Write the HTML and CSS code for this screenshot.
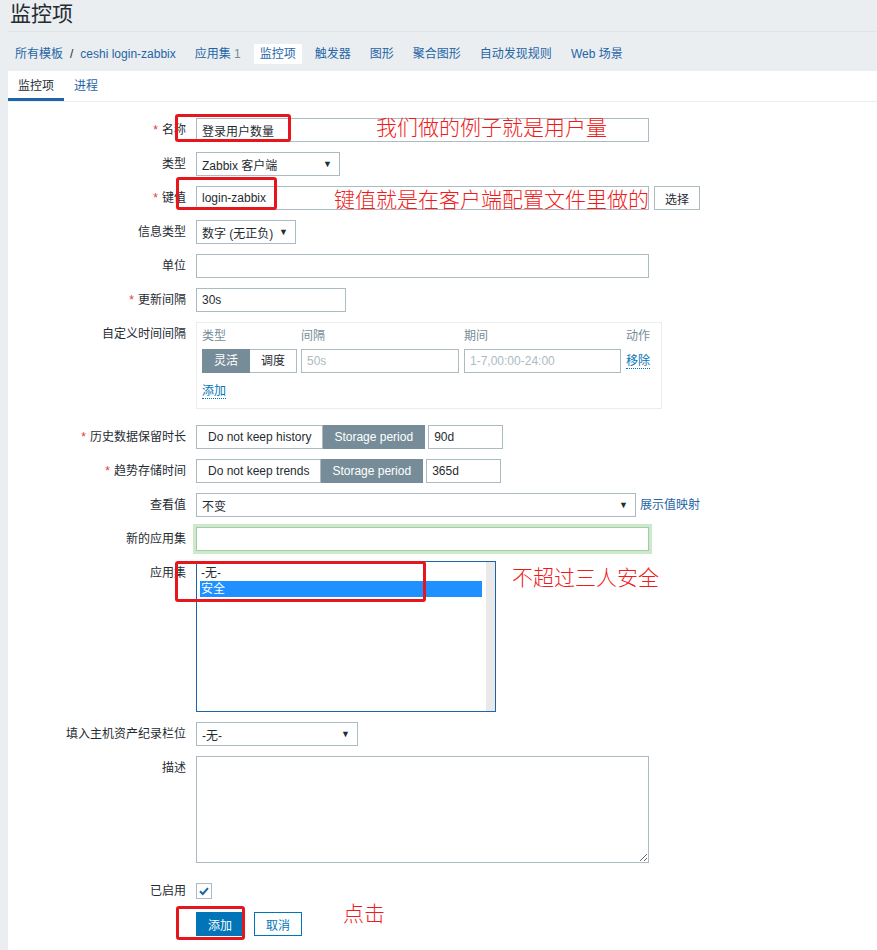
FILE: index.html
```html
<!DOCTYPE html>
<html lang="zh-CN">

<head>
    <meta charset="UTF-8">
    <title>监控项</title>
    <link rel="stylesheet" href="styles.css">
</head>

<body>
    <header class="page-header">
        <h1 class="page-title">监控项</h1>
    </header>

    <ul class="nav">
        <li><a href="#">所有模板</a><span class="sep">/</span><a href="#">ceshi login-zabbix</a></li>
        <li><a href="#">应用集</a> <span class="count">1</span></li>
        <li class="active"><a href="#">监控项</a></li>
        <li><a href="#">触发器</a></li>
        <li><a href="#">图形</a></li>
        <li><a href="#">聚合图形</a></li>
        <li><a href="#">自动发现规则</a></li>
        <li><a href="#">Web 场景</a></li>
    </ul>

    <div class="content">
        <div class="tabs">
            <span class="tab active">监控项</span>
            <a class="tab" href="#">进程</a>
        </div>

        <form class="form">
            <div class="row">
                <label class="row-label"><span class="req">*</span>名称</label>
                <input class="text w-wide" type="text" value="登录用户数量">
            </div>
            <div class="row">
                <label class="row-label">类型</label>
                <div class="select w-type"><span>Zabbix 客户端</span><span class="caret">▼</span></div>
            </div>
            <div class="row">
                <label class="row-label"><span class="req">*</span>键值</label>
                <input class="text w-wide" type="text" value="login-zabbix">
                <button class="btn-grey" type="button">选择</button>
            </div>
            <div class="row">
                <label class="row-label">信息类型</label>
                <div class="select w-info"><span>数字 (无正负)</span><span class="caret">▼</span></div>
            </div>
            <div class="row">
                <label class="row-label">单位</label>
                <input class="text w-wide" type="text">
            </div>
            <div class="row">
                <label class="row-label"><span class="req">*</span>更新间隔</label>
                <input class="text w-delay" type="text" value="30s">
            </div>
            <div class="row row-interval">
                <label class="row-label">自定义时间间隔</label>
                <div class="interval-box">
                    <div class="interval-grid">
                        <span class="th">类型</span>
                        <span class="th">间隔</span>
                        <span class="th">期间</span>
                        <span class="th">动作</span>

                        <div class="seg">
                            <span class="seg-btn on">灵活</span>
                            <span class="seg-btn">调度</span>
                        </div>
                        <input class="text" type="text" placeholder="50s">
                        <input class="text" type="text" placeholder="1-7,00:00-24:00">
                        <span class="cell-link"><a class="link-dotted" href="#">移除</a></span>
                    </div>
                    <div class="interval-add"><a class="link-dotted" href="#">添加</a></div>
                </div>
            </div>
            <div class="row">
                <label class="row-label"><span class="req">*</span>历史数据保留时长</label>
                <div class="seg">
                    <span class="seg-btn">Do not keep history</span>
                    <span class="seg-btn on">Storage period</span>
                </div>
                <input class="text w-period" type="text" value="90d">
            </div>
            <div class="row">
                <label class="row-label"><span class="req">*</span>趋势存储时间</label>
                <div class="seg">
                    <span class="seg-btn">Do not keep trends</span>
                    <span class="seg-btn on">Storage period</span>
                </div>
                <input class="text w-period" type="text" value="365d">
            </div>
            <div class="row">
                <label class="row-label">查看值</label>
                <div class="select w-valuemap"><span>不变</span><span class="caret">▼</span></div>
                <a class="link-plain" href="#">展示值映射</a>
            </div>
            <div class="row">
                <label class="row-label">新的应用集</label>
                <input class="text w-wide focused" type="text">
            </div>
            <div class="row">
                <label class="row-label">应用集</label>
                <div class="listbox">
                    <div class="list-items">
                        <div class="opt">-无-</div>
                        <div class="opt sel">安全</div>
                    </div>
                    <div class="list-scroll"></div>
                </div>
            </div>
            <div class="row row-inventory">
                <label class="row-label">填入主机资产纪录栏位</label>
                <div class="select w-inventory"><span>-无-</span><span class="caret">▼</span></div>
            </div>
            <div class="row">
                <label class="row-label">描述</label>
                <textarea class="textarea"></textarea>
            </div>
            <div class="row row-check">
                <label class="row-label">已启用</label>
                <span class="checkbox">
                    <svg width="14" height="14" viewBox="0 0 14 14">
                        <path d="M3 7.2 L5.8 10 L11 4.2" fill="none" stroke="#1f65a6" stroke-width="2" />
                    </svg>
                </span>
            </div>
            <div class="row buttons">
                <button class="btn" type="button">添加</button>
                <button class="btn btn-alt" type="button">取消</button>
            </div>
        </form>
    </div>

    <!-- red notes drawn over the screenshot -->
    <div class="mark mark-name"></div>
    <div class="note note-name">我们做的例子就是用户量</div>
    <div class="mark mark-key"></div>
    <div class="note note-key">键值就是在客户端配置文件里做的</div>
    <div class="mark mark-app"></div>
    <div class="note note-app">不超过三人安全</div>
    <div class="mark mark-add"></div>
    <div class="note note-add">点击</div>
</body>

</html>
```

FILE: styles.css
```css
body {
    margin: 0;
    background-color: #ebeef0;
    font-family: "Liberation Sans", Arial, "Noto Sans CJK SC", sans-serif;
    font-size: 12px;
    color: #1f2c33;
}

a {
    color: #1f65a6;
    text-decoration: none;
}

.page-header {
    margin-left: 8px;
    height: 31px;
    border-bottom: 1px solid #dfe4e7;
}

.page-title {
    margin: 0;
    padding-left: 2px;
    font-size: 21px;
    font-weight: normal;
    line-height: 28px;
}

/* breadcrumb + sub navigation */
.nav {
    display: flex;
    align-items: center;
    gap: 7px;
    height: 34px;
    margin: 0 0 0 8px;
    padding: 5px 0 0 1px;
    list-style: none;
}

.nav li {
    padding: 0 6px;
    line-height: 20px;
}

.nav li.active {
    background-color: #fff;
}

.nav .sep {
    margin: 0 7px;
    color: #1f2c33;
}

.nav .count {
    color: #768d99;
}

.content {
    margin-left: 8px;
    min-height: 879px;
    background-color: #fff;
}

.tabs {
    display: flex;
    height: 30px;
    border-bottom: 1px solid #ebeef0;
}

.tab {
    padding: 4px 10px 0;
    line-height: 23px;
    border-bottom: 3px solid transparent;
}

.tab.active {
    border-bottom-color: #1f65a6;
}

/* form */
.form {
    padding-top: 16px;
}

.row {
    display: flex;
    align-items: flex-start;
    margin-bottom: 10px;
}

.row-label {
    flex-shrink: 0;
    width: 178px;
    margin-right: 10px;
    text-align: right;
    line-height: 24px;
}

.req {
    margin-right: 4px;
    color: #e33734;
}

.text {
    box-sizing: border-box;
    height: 24px;
    margin: 0;
    padding: 0 5px;
    border: 1px solid #acbbc2;
    font: inherit;
    color: #1f2c33;
    background-color: #fff;
}

.text::placeholder {
    color: #acbbc2;
}

.w-wide {
    width: 453px;
}

.w-delay {
    width: 150px;
}

.w-period {
    width: 75px;
    margin-left: 3px;
}

.text.focused {
    border-color: #9fcf9f;
    box-shadow: 0 0 0 3px #cfe7cf;
}

.select {
    box-sizing: border-box;
    display: flex;
    align-items: center;
    justify-content: space-between;
    height: 24px;
    padding: 0 7px 0 5px;
    border: 1px solid #acbbc2;
    background-color: #fff;
}

.caret {
    font-size: 9px;
}

.w-type {
    width: 144px;
}

.w-info {
    width: 100px;
}

.w-valuemap {
    width: 440px;
}

.w-inventory {
    width: 162px;
}

.btn-grey {
    height: 24px;
    margin-left: 5px;
    padding: 0 10px;
    border: 1px solid #acbbc2;
    background-color: #fff;
    font: inherit;
    color: #1f2c33;
}

.link-plain {
    margin-left: 4px;
    line-height: 24px;
}

.link-dotted {
    color: #0275b8;
    border-bottom: 1px dotted #0275b8;
}

/* custom intervals */
.row-interval {
    margin-bottom: 16px;
}

.interval-box {
    box-sizing: border-box;
    width: 466px;
    padding: 5px 5px 8px;
    border: 1px solid #ebeef0;
}

.interval-grid {
    display: grid;
    grid-template-columns: 94px 158px 157px auto;
    column-gap: 5px;
    row-gap: 5px;
}

.th {
    line-height: 16px;
    color: #768d99;
}

.cell-link {
    line-height: 24px;
}

.interval-add {
    margin-top: 9px;
    line-height: 18px;
}

.seg {
    display: flex;
}

.seg-btn {
    box-sizing: border-box;
    height: 24px;
    padding: 0 11px;
    line-height: 22px;
    border: 1px solid #acbbc2;
    background-color: #fff;
    white-space: nowrap;
}

.seg-btn + .seg-btn {
    border-left: 0;
}

.seg-btn.on {
    background-color: #768d99;
    border-color: #768d99;
    color: #fff;
}

/* application list */
.listbox {
    box-sizing: border-box;
    display: flex;
    width: 300px;
    height: 151px;
    border: 1px solid #1f65a6;
}

.list-items {
    flex: 1;
    padding: 3px 4px 0 3px;
}

.opt {
    padding-left: 1px;
    line-height: 16px;
}

.opt.sel {
    background-color: #1e90ff;
    color: #fff;
}

.list-scroll {
    width: 9px;
    background-color: #e9e9e9;
}

.textarea {
    box-sizing: border-box;
    width: 453px;
    height: 107px;
    margin: 0;
    border: 1px solid #acbbc2;
    font: inherit;
}

.row-check {
    margin-top: 16px;
    margin-bottom: 9px;
    align-items: center;
}

.checkbox {
    box-sizing: border-box;
    display: flex;
    align-items: center;
    justify-content: center;
    width: 16px;
    height: 16px;
    border: 1px solid #acbbc2;
}

.buttons {
    padding-left: 188px;
    gap: 10px;
}

.btn {
    height: 24px;
    padding: 0 11px;
    border: 1px solid #0275b8;
    background-color: #0275b8;
    font: inherit;
    color: #fff;
}

.btn-alt {
    background-color: #fff;
    color: #0275b8;
}

/* red annotations */
.mark {
    position: absolute;
    box-sizing: border-box;
    border: 3px solid #e5161c;
    border-radius: 3px;
}

.mark-name {
    left: 175px;
    top: 114px;
    width: 116px;
    height: 28px;
}

.mark-key {
    left: 176px;
    top: 177px;
    width: 101px;
    height: 33px;
}

.mark-app {
    left: 175px;
    top: 561px;
    width: 251px;
    height: 41px;
}

.mark-add {
    left: 176px;
    top: 906px;
    width: 69px;
    height: 34px;
}

.note {
    position: absolute;
    font-family: "Noto Sans CJK SC", sans-serif;
    font-size: 21px;
    font-weight: 300;
    line-height: 24px;
    color: #f01c1c;
    white-space: nowrap;
}

.note-name {
    left: 376px;
    top: 114px;
}

.note-key {
    left: 334px;
    top: 186px;
}

.note-app {
    left: 512px;
    top: 564px;
}

.note-add {
    left: 343px;
    top: 900px;
}
```
